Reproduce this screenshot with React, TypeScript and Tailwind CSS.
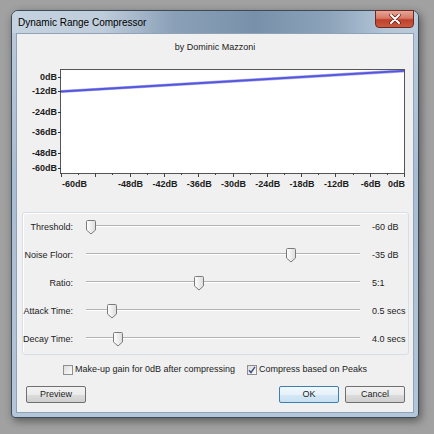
import React from "react";

const sliders = [
  { label: "Threshold:", value: "-60 dB", pos: 0 },
  { label: "Noise Floor:", value: "-35 dB", pos: 75.8 },
  { label: "Ratio:", value: "5:1", pos: 41 },
  { label: "Attack Time:", value: "0.5 secs", pos: 8 },
  { label: "Decay Time:", value: "4.0 secs", pos: 10.3 },
];

const yLabels = [
  { text: "0dB", y: 7 },
  { text: "-12dB", y: 21 },
  { text: "-24dB", y: 42 },
  { text: "-36dB", y: 62 },
  { text: "-48dB", y: 83 },
  { text: "-60dB", y: 98 },
];

const xLabels = [-48, -42, -36, -30, -24, -18, -12, -6];

// px position on the graph box for a dB input
const xFor = (db: number) => 1 + (343 * (db + 60)) / 60;

function Thumb() {
  return (
    <svg width="10" height="15" viewBox="0 0 10 15">
      <defs>
        <linearGradient id="thumbg" x1="0" y1="0" x2="1" y2="0">
          <stop offset="0" stopColor="#ffffff" />
          <stop offset="1" stopColor="#dcdcdc" />
        </linearGradient>
      </defs>
      <path
        d="M1.5 0.5 H8.5 A1 1 0 0 1 9.5 1.5 V10 L5 14 L0.5 10 V1.5 A1 1 0 0 1 1.5 0.5 Z"
        fill="url(#thumbg)"
        stroke="#7a7a7a"
      />
    </svg>
  );
}

function SliderRow({ label, value, pos }: { label: string; value: string; pos: number }) {
  return (
    <div className="h-[28px] flex items-center">
      <div className="w-[50px] text-right text-[9px] leading-[11px] whitespace-nowrap">{label}</div>
      <div className="ml-[13px] w-[274px] h-[15px] relative">
        <div className="absolute left-0 right-0 top-[5px] h-[2px] border-t border-[#b4b4b4] bg-white" />
        <div className="absolute top-0" style={{ left: `${(pos / 100) * 264}px` }}>
          <Thumb />
        </div>
      </div>
      <div className="ml-[12px] text-[9px] leading-[11px] whitespace-nowrap">{value}</div>
    </div>
  );
}

function Checkbox({ checked }: { checked?: boolean }) {
  return (
    <div className="w-[10px] h-[10px] border border-[#8e8f8f] bg-[linear-gradient(135deg,#dcdcdc,#fbfbfb)] flex items-center justify-center">
      {checked && (
        <svg width="8" height="8" viewBox="0 0 8 8">
          <path d="M1 4.2 L3 6.5 L7 0.8" fill="none" stroke="#3b4f86" strokeWidth="1.4" />
        </svg>
      )}
    </div>
  );
}

function Button({ children, focused }: { children: React.ReactNode; focused?: boolean }) {
  return (
    <div
      className={`w-[60px] h-[17px] rounded-[2px] border flex items-center justify-center text-[9px] ${
        focused
          ? "border-[#3c7fb1] bg-[linear-gradient(180deg,#f1f8fc_0%,#e6f1f9_50%,#d5e8f5_51%,#c8e0f2_100%)]"
          : "border-[#707070] bg-[linear-gradient(180deg,#f2f2f2_0%,#ebebeb_50%,#dddddd_51%,#cfcfcf_100%)]"
      }`}
    >
      {children}
    </div>
  );
}

export default function App() {
  return (
    <div className="w-[434px] h-[434px] overflow-hidden bg-[#a1a1a1] pt-[10px] pl-[11px] font-['Liberation_Sans',Arial,sans-serif] text-[#1b1b1b]">
      <div className="relative w-[408px] h-[408px] rounded-t-[7px] rounded-b-[4px] border border-[#3d4a58] bg-[linear-gradient(180deg,#bccbdb_0%,#a9bdd2_40%,#b4c6d9_100%)] shadow-[2px_3px_8px_rgba(0,0,0,0.45)] flex flex-col">
        <div className="h-[22px] rounded-t-[6px] bg-[linear-gradient(90deg,#c5d2df_0%,#bfcddb_22%,#8aa0b7_40%,#7891aa_60%,#8ca3ba_78%,#b3c5d7_92%,#bccbdb_100%)] flex items-center pl-[6px] text-[10px] text-black">
          Dynamic Range Compressor
        </div>

        {/* close button */}
        <div className="absolute top-[-1px] right-[4px] w-[39px] h-[18px] rounded-b-[4px] border border-[#6b2a22] bg-[linear-gradient(180deg,#e8a598_0%,#d77a66_45%,#c0402c_55%,#c85a40_100%)] flex items-center justify-center">
          <svg width="12" height="10" viewBox="0 0 12 10">
            <path d="M2 1 L10 9 M10 1 L2 9" stroke="#5a1c14" strokeWidth="3.4" strokeLinecap="round" />
            <path d="M2 1 L10 9 M10 1 L2 9" stroke="#ffffff" strokeWidth="2" strokeLinecap="round" />
          </svg>
        </div>

        <div className="flex-1 mx-[4px] mb-[4px] border border-[#8ea3b8] bg-[#f0f0f0] flex flex-col">
          <div className="pt-[8px] text-center text-[9px] leading-[11px]">by Dominic Mazzoni</div>

          {/* response graph */}
          <div className="mt-[16px] ml-[43px] w-[345px] h-[105px] relative border border-[#555555] bg-white">
            <svg className="absolute inset-0" width="343" height="103" viewBox="0 0 343 103">
              <line x1="0" y1="21.5" x2="343" y2="0.8" stroke="#aeaef0" strokeWidth="3.2" />
              <line x1="0" y1="21.5" x2="343" y2="0.8" stroke="#5656dc" strokeWidth="1.8" />
            </svg>

            {yLabels.map((l) => (
              <div
                key={l.text}
                className="absolute right-full flex items-center -translate-y-1/2"
                style={{ top: `${l.y}px` }}
              >
                <span className="text-[9px] font-bold leading-[10px] mr-[1px]">{l.text}</span>
                <span className="w-[3px] h-px bg-[#333333]" />
              </div>
            ))}

            {/* x ticks */}
            <svg className="absolute left-[-1px] top-full" width="347" height="6" viewBox="0 0 347 6">
              {Array.from({ length: 21 }).map((_, i) => {
                const x = Math.round(xFor(-60 + i * 3)) + 0.5;
                const major = i % 2 === 0;
                return <line key={i} x1={x} y1="0" x2={x} y2={major ? 4 : 2} stroke="#444444" />;
              })}
            </svg>

            <div className="absolute left-[1px] top-[109px] text-[9px] font-bold leading-[10px]">-60dB</div>
            {xLabels.map((db) => (
              <div
                key={db}
                className="absolute top-[109px] -translate-x-1/2 text-[9px] font-bold leading-[10px]"
                style={{ left: `${xFor(db)}px` }}
              >
                {db}dB
              </div>
            ))}
            <div className="absolute right-[-1px] top-[109px] text-[9px] font-bold leading-[10px]">0dB</div>
          </div>

          {/* sliders */}
          <div className="mt-[38px] ml-[5px] mr-[4px] h-[143px] rounded-[3px] border border-[#d5dfe5] shadow-[inset_1px_1px_0_#ffffff] flex flex-col">
            {sliders.map((s) => (
              <SliderRow key={s.label} {...s} />
            ))}
          </div>

          <div className="mt-[9px] h-[12px] flex items-center justify-center text-[9px]">
            <Checkbox />
            <span className="ml-[2px]">Make-up gain for 0dB after compressing</span>
            <span className="ml-[12px]">
              <Checkbox checked />
            </span>
            <span className="ml-[2px]">Compress based on Peaks</span>
          </div>

          <div className="mt-[10px] flex items-center pl-[9px] pr-[8px]">
            <Button>Preview</Button>
            <div className="flex-1" />
            <Button focused>OK</Button>
            <div className="ml-[6px]">
              <Button>Cancel</Button>
            </div>
          </div>
        </div>
      </div>
    </div>
  );
}
